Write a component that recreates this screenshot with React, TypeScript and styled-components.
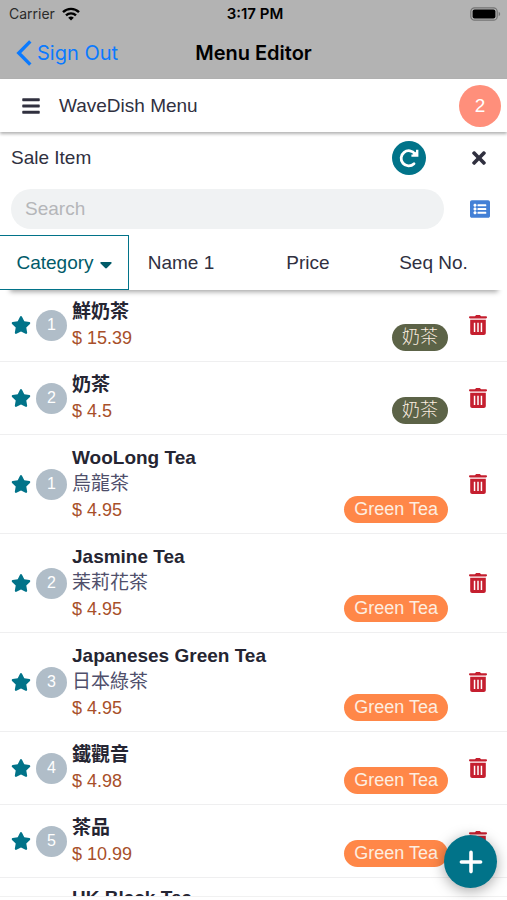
import React, { useState } from "react";
import styled, { createGlobalStyle } from "styled-components";
import { FaBars, FaListAlt, FaStar, FaTimes } from "react-icons/fa";

const teal = "#017389";
const ink = "#30303f";

const GlobalStyle = createGlobalStyle`
  * { box-sizing: border-box; }
  body { margin: 0; background: #fff; }
  button { font: inherit; color: inherit; background: none; border: 0; padding: 0; cursor: pointer; }
`;

const Screen = styled.div`
  position: relative;
  display: flex;
  flex-direction: column;
  height: 100vh;
  overflow: hidden;
  background: #fff;
  color: ${ink};
  font-family: "Liberation Sans", "Noto Sans CJK TC", sans-serif;
  font-size: 19px;
`;

const SystemHeader = styled.header`
  flex: none;
  height: 79px;
  background: #b3b3b3;
  color: #000;
  font-family: Inter, sans-serif;
`;

const StatusBar = styled.div`
  display: grid;
  grid-template-columns: 1fr auto 1fr;
  align-items: center;
  height: 27px;
  padding: 0 6px 0 9px;
  font-size: 14px;
`;

const Carrier = styled.span`
  display: flex;
  align-items: center;
  gap: 7px;
  color: #2b2b2b;
`;

const Clock = styled.time`
  font-size: 15px;
  font-weight: 600;
`;

const BatteryHolder = styled.span`
  display: flex;
  justify-content: flex-end;
`;

const NavBar = styled.div`
  display: grid;
  grid-template-columns: 1fr auto 1fr;
  align-items: center;
  height: 51px;
  padding: 0 16px;
`;

const BackLink = styled.a`
  display: flex;
  align-items: center;
  gap: 5px;
  color: #0a7aff;
  font-size: 20px;
  text-decoration: none;
`;

const NavTitle = styled.h1`
  margin: 0;
  font-size: 20px;
  font-weight: 600;
`;

const AppBar = styled.div`
  flex: none;
  display: flex;
  align-items: center;
  height: 53px;
  padding: 0 6px 0 21px;
  box-shadow: 0 2px 3px rgba(0, 0, 0, 0.3);
`;

const IconButton = styled.button<{ $size: number; $color?: string }>`
  display: flex;
  align-items: center;
  justify-content: center;
  flex: none;
  font-size: ${(p) => p.$size}px;
  color: ${(p) => p.$color ?? ink};
`;

const AppTitle = styled.span`
  flex: 1;
  margin-left: 18px;
`;

const CountBadge = styled.span`
  display: flex;
  align-items: center;
  justify-content: center;
  width: 42px;
  height: 42px;
  border-radius: 50%;
  background: #ff8f7b;
  color: #fff;
`;

const SectionBar = styled.div`
  flex: none;
  display: flex;
  align-items: center;
  height: 51px;
  padding: 0 18px 0 11px;
`;

const SectionTitle = styled.h2`
  flex: 1;
  margin: 0;
  font-size: 19px;
  font-weight: 400;
`;

const RefreshButton = styled.button`
  display: flex;
  align-items: center;
  justify-content: center;
  width: 34px;
  height: 34px;
  margin-right: 43px;
  border-radius: 50%;
  background: ${teal};
`;

const SearchBar = styled.div`
  flex: none;
  display: flex;
  align-items: center;
  gap: 26px;
  height: 52px;
  padding: 0 17px 0 11px;
`;

const SearchInput = styled.input`
  flex: 1;
  min-width: 0;
  height: 40px;
  padding: 0 14px;
  border: 0;
  border-radius: 20px;
  outline: none;
  background: #f0f2f3;
  color: ${ink};
  font: inherit;
  &::placeholder { color: #b5b6b9; opacity: 1; }
`;

const SortBar = styled.div`
  position: relative;
  z-index: 1;
  flex: none;
  height: 55px;
  &::after {
    content: "";
    position: absolute;
    z-index: -1;
    inset: 40px 9px 0 10px;
    box-shadow: 0 2px 5px rgba(0, 0, 0, 0.35);
  }
`;

const SortOptions = styled.div`
  display: grid;
  grid-template-columns: 129fr 105fr 149fr 102fr 22fr;
  height: 100%;
  background: #fff;
`;

const SortButton = styled.button<{ $active: boolean }>`
  display: flex;
  align-items: center;
  justify-content: center;
  gap: 6px;
  border: 1px solid ${(p) => (p.$active ? teal : "transparent")};
  border-left: 0;
  color: ${(p) => (p.$active ? "#015b69" : ink)};
  white-space: nowrap;
`;

const ItemList = styled.ul`
  flex: 1;
  min-height: 0;
  margin: -1px 0 3px;
  padding: 0;
  overflow: hidden;
  list-style: none;
  border-bottom: 1px solid #f1f1f1;
`;

const Item = styled.li`
  display: flex;
  align-items: center;
  padding: 10px 20px 10px 11px;
  border-bottom: 1px solid #efeff0;
`;

const NextItem = styled.li`
  padding: 7px 20px 0 72px;
`;

const Sequence = styled.span`
  display: flex;
  align-items: center;
  justify-content: center;
  flex: none;
  width: 31px;
  height: 31px;
  margin: 0 5px;
  border-radius: 50%;
  background: #b0bdc8;
  color: #fff;
  font-size: 16px;
`;

const Details = styled.div`
  flex: 1;
  min-width: 0;
  line-height: 26px;
`;

const Name = styled.h3`
  margin: 0;
  color: #252532;
  font-size: 19px;
  line-height: 26px;
  font-weight: 700;
`;

const AltName = styled.div`
  color: #4f4f6b;
`;

const Price = styled.div`
  color: #a84f2a;
  font-size: 18px;
`;

const Tag = styled.span<{ $color: string }>`
  align-self: flex-end;
  margin-right: 21px;
  padding: 0 10px;
  border-radius: 14px;
  background: ${(p) => p.$color};
  color: #fdeee0;
  font-size: 18px;
  font-weight: 300;
  line-height: 27px;
`;

const AddButton = styled.button`
  position: absolute;
  z-index: 2;
  right: 10px;
  bottom: 12px;
  display: flex;
  align-items: center;
  justify-content: center;
  width: 53px;
  height: 53px;
  border-radius: 50%;
  background: ${teal};
  box-shadow: 0 3px 14px rgba(0, 0, 0, 0.35);
`;

const milkTea = { label: "奶茶", color: "#5c6347" };
const greenTea = { label: "Green Tea", color: "#ff8748" };

const items = [
  { seq: 1, name: "鮮奶茶", price: "15.39", tag: milkTea },
  { seq: 2, name: "奶茶", price: "4.5", tag: milkTea },
  { seq: 1, name: "WooLong Tea", alt: "烏龍茶", price: "4.95", tag: greenTea },
  { seq: 2, name: "Jasmine Tea", alt: "茉莉花茶", price: "4.95", tag: greenTea },
  { seq: 3, name: "Japaneses Green Tea", alt: "日本綠茶", price: "4.95", tag: greenTea },
  { seq: 4, name: "鐵觀音", price: "4.98", tag: greenTea },
  { seq: 5, name: "茶品", price: "10.99", tag: greenTea },
];

const sortKeys = ["Category", "Name 1", "Price", "Seq No."];

const WifiIcon = () => (
  <svg width="18" height="14" viewBox="0 0 18 14" fill="none" stroke="#000" strokeWidth="2.4" aria-hidden="true">
    <path d="M1 5.2a11.4 11.4 0 0 1 16 0" />
    <path d="M4 8.4a7.2 7.2 0 0 1 10 0" />
    <path d="M9 13.6 6.2 10.8a4 4 0 0 1 5.6 0z" fill="#000" stroke="none" />
  </svg>
);

const BatteryIcon = () => (
  <svg width="31" height="14" viewBox="0 0 31 14" aria-hidden="true">
    <rect x="0.8" y="0.8" width="26.4" height="12.4" rx="3.8" fill="none" stroke="#747474" strokeWidth="1.2" />
    <rect x="2.6" y="2.6" width="22.8" height="8.8" rx="2" fill="#000" />
    <path d="M28.7 4.8c2 .8 2 3.6 0 4.4z" fill="#747474" />
  </svg>
);

const BackIcon = () => (
  <svg width="16" height="26" viewBox="0 0 16 26" fill="none" stroke="currentColor" strokeWidth="3.4" aria-hidden="true">
    <path d="M14.3 1.4 2.8 13l11.5 11.6" />
  </svg>
);

const CaretIcon = () => (
  <svg width="12" height="12" viewBox="0 0 12 12" fill="currentColor" aria-hidden="true">
    <path d="M1.2 5h9.6c.9 0 1.2.8.6 1.4L6.9 11c-.5.5-1.3.5-1.8 0L.6 6.4C0 5.8.3 5 1.2 5z" />
  </svg>
);

const RefreshIcon = () => (
  <svg width="22" height="22" viewBox="0 0 22 22" fill="none" stroke="#fff" aria-hidden="true">
    <path d="M17 7A7.600 7.600 0 1 0 16 16.800" strokeWidth="2.800" strokeLinecap="round" />
    <path d="M19.200 2.800V8.600H13.400" strokeWidth="2.400" />
    <path d="M19.200 3.400V8.600H14z" fill="#fff" stroke="none" />
  </svg>
);

const TrashIcon = () => (
  <svg width="18" height="20" viewBox="0 0 18 20" fill="currentColor" aria-hidden="true">
    <path d="M1 1.3h4.800L6.700.4C7 .1 7.300 0 7.600 0h2.800c.3 0 .6.1.9.4l.9.9H17c.6 0 1 .3 1 .8v.5c0 .5-.4.8-1 .8H1c-.6 0-1-.3-1-.8v-.5c0-.5.4-.8 1-.8z" />
    <path
      fillRule="evenodd"
      d="M1.2 4.800h15.600v13.200c0 1.200-.8 2-2 2H3.200c-1.200 0-2-.8-2-2zM4.800 7.800v9.200h1.500V7.800zM8.250 7.800v9.200h1.500V7.800zM11.700 7.800v9.200h1.500V7.800z"
    />
  </svg>
);

const PlusIcon = () => (
  <svg width="24" height="24" viewBox="0 0 24 24" stroke="#fff" strokeWidth="3.6" strokeLinecap="round" aria-hidden="true">
    <path d="M12 2.4v19.2M2.4 12h19.2" />
  </svg>
);

export default function App() {
  const [sort, setSort] = useState("Category");
  const [query, setQuery] = useState("");

  return (
    <Screen>
      <GlobalStyle />
      <SystemHeader>
        <StatusBar>
          <Carrier>Carrier <WifiIcon /></Carrier>
          <Clock>3:17 PM</Clock>
          <BatteryHolder><BatteryIcon /></BatteryHolder>
        </StatusBar>
        <NavBar>
          <BackLink href="#sign-out"><BackIcon />Sign Out</BackLink>
          <NavTitle>Menu Editor</NavTitle>
        </NavBar>
      </SystemHeader>

      <AppBar>
        <IconButton $size={20} aria-label="Open menu"><FaBars /></IconButton>
        <AppTitle>WaveDish Menu</AppTitle>
        <CountBadge>2</CountBadge>
      </AppBar>

      <SectionBar>
        <SectionTitle>Sale Item</SectionTitle>
        <RefreshButton aria-label="Refresh"><RefreshIcon /></RefreshButton>
        <IconButton $size={20} aria-label="Close"><FaTimes /></IconButton>
      </SectionBar>

      <SearchBar>
        <SearchInput
          aria-label="Search"
          placeholder="Search"
          value={query}
          onChange={(e) => setQuery(e.target.value)}
        />
        <IconButton $size={20} $color="#4380d6" aria-label="List view"><FaListAlt /></IconButton>
      </SearchBar>

      <SortBar>
        <SortOptions>
          {sortKeys.map((key) => (
            <SortButton key={key} $active={key === sort} onClick={() => setSort(key)}>
              {key}
              {key === sort && <CaretIcon />}
            </SortButton>
          ))}
        </SortOptions>
      </SortBar>

      <ItemList>
        {items.map((item) => (
          <Item key={item.name}>
            <IconButton $size={20} $color={teal} aria-label={`Favorite ${item.name}`}><FaStar /></IconButton>
            <Sequence>{item.seq}</Sequence>
            <Details>
              <Name>{item.name}</Name>
              {item.alt && <AltName>{item.alt}</AltName>}
              <Price>$ {item.price}</Price>
            </Details>
            <Tag $color={item.tag.color}>{item.tag.label}</Tag>
            <IconButton $size={20} $color="#c51f2f" aria-label={`Delete ${item.name}`}><TrashIcon /></IconButton>
          </Item>
        ))}
        <NextItem>
          <Name>HK Black Tea</Name>
        </NextItem>
      </ItemList>

      <AddButton aria-label="Add item"><PlusIcon /></AddButton>
    </Screen>
  );
}
